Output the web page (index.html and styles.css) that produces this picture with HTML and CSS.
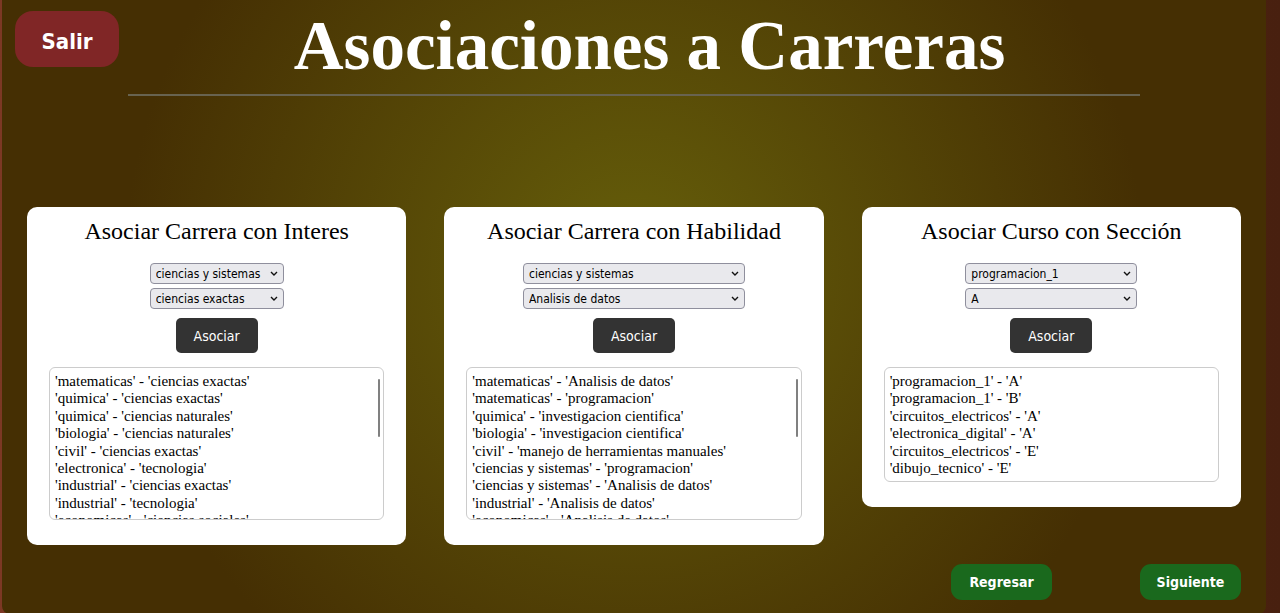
FILE: index.html
```html
<!DOCTYPE html>
<html lang="es">
<head>
<meta charset="utf-8">
<meta name="viewport" content="width=device-width, initial-scale=1">
<title>Asociaciones a Carreras</title>
<link rel="stylesheet" href="styles.css">
</head>
<body>
<div class="page">
  <header class="header">
    <button class="exit" type="button">Salir</button>
    <h1 class="title">Asociaciones a Carreras</h1>
  </header>
  <hr class="divider">
  <main class="cards">
    <section class="card">
      <h2 class="card-title">Asociar Carrera con Interes</h2>
      <form class="form form-narrow">
        <div class="field">
          <select class="select" aria-label="Carrera"><option>ciencias y sistemas</option></select>
          <svg class="chevron" viewBox="0 0 8 6" aria-hidden="true"><path d="M1 1l3 3 3-3"/></svg>
        </div>
        <div class="field">
          <select class="select" aria-label="Interes"><option>ciencias exactas</option></select>
          <svg class="chevron" viewBox="0 0 8 6" aria-hidden="true"><path d="M1 1l3 3 3-3"/></svg>
        </div>
        <button class="submit" type="button">Asociar</button>
      </form>
      <div class="list-box">
        <ul class="list list-long">
          <li>'matematicas' - 'ciencias exactas'</li>
          <li>'quimica' - 'ciencias exactas'</li>
          <li>'quimica' - 'ciencias naturales'</li>
          <li>'biologia' - 'ciencias naturales'</li>
          <li>'civil' - 'ciencias exactas'</li>
          <li>'electronica' - 'tecnologia'</li>
          <li>'industrial' - 'ciencias exactas'</li>
          <li>'industrial' - 'tecnologia'</li>
          <li>'economicas' - 'ciencias sociales'</li>
        </ul>
        <span class="thumb"></span>
      </div>
    </section>
    <section class="card">
      <h2 class="card-title">Asociar Carrera con Habilidad</h2>
      <form class="form form-wide">
        <div class="field">
          <select class="select" aria-label="Carrera"><option>ciencias y sistemas</option></select>
          <svg class="chevron" viewBox="0 0 8 6" aria-hidden="true"><path d="M1 1l3 3 3-3"/></svg>
        </div>
        <div class="field">
          <select class="select" aria-label="Habilidad"><option>Analisis de datos</option></select>
          <svg class="chevron" viewBox="0 0 8 6" aria-hidden="true"><path d="M1 1l3 3 3-3"/></svg>
        </div>
        <button class="submit" type="button">Asociar</button>
      </form>
      <div class="list-box">
        <ul class="list list-long">
          <li>'matematicas' - 'Analisis de datos'</li>
          <li>'matematicas' - 'programacion'</li>
          <li>'quimica' - 'investigacion cientifica'</li>
          <li>'biologia' - 'investigacion cientifica'</li>
          <li>'civil' - 'manejo de herramientas manuales'</li>
          <li>'ciencias y sistemas' - 'programacion'</li>
          <li>'ciencias y sistemas' - 'Analisis de datos'</li>
          <li>'industrial' - 'Analisis de datos'</li>
          <li>'economicas' - 'Analisis de datos'</li>
        </ul>
        <span class="thumb"></span>
      </div>
    </section>
    <section class="card">
      <h2 class="card-title">Asociar Curso con Sección</h2>
      <form class="form form-medium">
        <div class="field">
          <select class="select" aria-label="Curso"><option>programacion_1</option></select>
          <svg class="chevron" viewBox="0 0 8 6" aria-hidden="true"><path d="M1 1l3 3 3-3"/></svg>
        </div>
        <div class="field">
          <select class="select" aria-label="Sección"><option>A</option></select>
          <svg class="chevron" viewBox="0 0 8 6" aria-hidden="true"><path d="M1 1l3 3 3-3"/></svg>
        </div>
        <button class="submit" type="button">Asociar</button>
      </form>
      <div class="list-box">
        <ul class="list">
          <li>'programacion_1' - 'A'</li>
          <li>'programacion_1' - 'B'</li>
          <li>'circuitos_electricos' - 'A'</li>
          <li>'electronica_digital' - 'A'</li>
          <li>'circuitos_electricos' - 'E'</li>
          <li>'dibujo_tecnico' - 'E'</li>
        </ul>
      </div>
    </section>
  </main>
  <footer class="footer">
    <button class="nav" type="button">Regresar</button>
    <button class="nav" type="button">Siguiente</button>
  </footer>
</div>
</body>
</html>
```

FILE: styles.css
```css
* {
  box-sizing: border-box;
}

body {
  margin: 0;
  padding: 0 14px 0 2px;
  background: linear-gradient(90deg, #7c3824, #48200f);
  font-family: "Liberation Serif", "Times New Roman", serif;
  color: #000;
}

button,
select {
  font-family: "DejaVu Sans Condensed", "DejaVu Sans", Tahoma, sans-serif;
}

.page {
  min-height: 100vh;
  padding-bottom: 14px;
  border-radius: 0 0 8px 8px;
  background: radial-gradient(circle 510px at 50% 44%, #665f0a, #452f03);
}

.header {
  display: flex;
  align-items: flex-start;
  padding: 11px 86px 0 13px;
}

.exit {
  width: 104px;
  height: 56px;
  padding: 4px 0 0;
  border: 0;
  border-radius: 18px;
  background: #802626;
  color: #fff;
  font-size: 22px;
  font-weight: bold;
}

.title {
  flex: 1;
  margin: 0;
  color: #fff;
  font-size: 69px;
  line-height: 70px;
  text-align: center;
}

.divider {
  width: 80%;
  height: 2px;
  margin: 13px auto 0;
  border: 0;
  background: #686350;
}

.header + .divider {
  margin-top: 13px;
}

.cards {
  display: grid;
  grid-template-columns: repeat(3, 1fr);
  gap: 38px;
  align-items: start;
  margin-top: 111px;
  padding: 0 25px;
}

.card {
  padding: 9px 22px 25px;
  border-radius: 10px;
  background: #fff;
}

.card-title {
  margin: 0;
  font-size: 24px;
  font-weight: normal;
  line-height: 30px;
  text-align: center;
}

.form {
  display: flex;
  flex-direction: column;
  align-items: center;
  gap: 4px;
  margin: 17px 0 14px;
}

.field {
  position: relative;
}

.form-narrow .field {
  width: 134px;
}

.form-medium .field {
  width: 172px;
}

.form-wide .field {
  width: 222px;
}

.select {
  display: block;
  width: 100%;
  height: 21px;
  padding: 0 5px;
  border: 1px solid #8f8f9d;
  border-radius: 4px;
  background: #e9e9ed;
  color: #000;
  font-size: 12px;
  appearance: none;
}

.chevron {
  position: absolute;
  top: 8px;
  right: 6px;
  width: 8px;
  height: 6px;
  fill: none;
  stroke: #111;
  stroke-width: 1.4;
  pointer-events: none;
}

.submit {
  width: 82px;
  height: 35px;
  margin-top: 5px;
  border: 0;
  border-radius: 5px;
  background: #333;
  color: #fff;
  font-size: 14px;
}

.list-box {
  position: relative;
  max-height: 153px;
  overflow: hidden;
  border: 1px solid #ccc;
  border-radius: 6px;
}

.list {
  display: grid;
  align-content: space-between;
  min-height: 113px;
  margin: 0;
  padding: 5px 5px 4px;
  font-size: 15px;
  line-height: 17px;
  list-style: none;
}

.list-long {
  min-height: 165px;
}

.thumb {
  position: absolute;
  top: 11px;
  right: 3px;
  width: 2px;
  height: 58px;
  border-radius: 1px;
  background: #808080;
}

.footer {
  display: flex;
  justify-content: flex-end;
  gap: 88px;
  margin-top: 19px;
  padding: 0 25px;
}

.nav {
  width: 101px;
  height: 36px;
  border: 0;
  border-radius: 11px;
  background: #1a691d;
  color: #fff;
  font-size: 14px;
  font-weight: bold;
}
```
